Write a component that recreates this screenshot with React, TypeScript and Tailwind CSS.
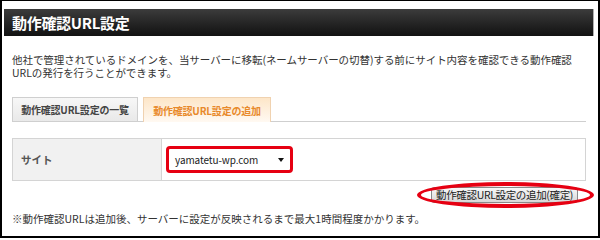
import React from "react";

const jp = "font-['Noto_Sans_CJK_JP','Liberation_Sans',sans-serif]";

export default function App() {
  return (
    <div className={`w-[600px] h-[238px] bg-white border-black border-t border-x-2 border-b-2 overflow-hidden ${jp}`}>
      <div className="mt-[8px] ml-[2px] mr-[4px] h-[27px] flex items-center pl-[8px] bg-gradient-to-b from-[#3c3c3c] to-[#121212] border-r border-[#b0b0b0]">
        <span className="text-white font-bold text-[15px] leading-none tracking-[-0.3px]">動作確認URL設定</span>
      </div>

      <div className="pl-[10px] pr-[12px]">
        <p className="mt-[17px] text-[10.5px] leading-[13px] text-[#333] tracking-[-0.05px]">
          他社で管理されているドメインを、当サーバーに移転(ネームサーバーの切替)する前にサイト内容を確認できる動作確認URLの発行を行うことができます。
        </p>

        <div className="mt-[18px] flex items-end gap-[5px] border-b border-[#cfcfcf] h-[25px]">
          <div className="w-[126px] h-[24px] flex items-center justify-center border border-b-0 border-[#cfcfcf] bg-gradient-to-b from-[#f7f7f7] to-[#e9e9e9]">
            <span className="text-[10px] font-bold text-[#444] tracking-[-0.2px]">動作確認URL設定の一覧</span>
          </div>
          <div className="w-[128px] h-[25px] -mb-px flex items-center justify-center border border-b-0 border-[#f0d2b0] bg-gradient-to-b from-[#fde6c8] to-[#fff9f2]">
            <span className="text-[10px] font-bold text-[#e8892a] tracking-[-0.2px]">動作確認URL設定の追加</span>
          </div>
        </div>

        <div className="mt-[16px] flex h-[43px] border border-[#d4d4d4]">
          <div className="w-[149px] bg-[#f1f1f1] border-r border-[#d4d4d4] flex items-center pl-[8px]">
            <span className="text-[10.5px] font-bold text-[#555]">サイト</span>
          </div>
          <div className="flex-1 flex items-center pl-[4px]">
            <div className="w-[127px] h-[27px] rounded-[4px] border-[3px] border-[#e60012] bg-white flex items-center justify-between pl-[6px] pr-[6px]">
              <span className="text-[10px] text-[#222] tracking-[-0.1px]">yamatetu-wp.com</span>
              <svg width="6" height="4" viewBox="0 0 6 4">
                <path d="M0 0h6L3 4z" fill="#111" />
              </svg>
            </div>
          </div>
        </div>

        <div className="mt-[6px] flex justify-end pr-[8px]">
          <div className="relative">
            <button className="h-[16px] px-[4px] rounded-[3px] border border-[#8a8a8a] bg-gradient-to-b from-[#f8f8f8] to-[#d8d8d8] flex items-center">
              <span className="text-[10.5px] leading-none text-[#222] tracking-[-0.35px]">動作確認URL設定の追加(確定)</span>
            </button>
            <div className="absolute left-[-14px] right-[-16px] top-[-5px] bottom-[-5px] rounded-[50%] border-[4px] border-[#e60012]" />
          </div>
        </div>

        <p className="mt-[9px] text-[10.5px] leading-[13px] text-[#333]">
          ※動作確認URLは追加後、サーバーに設定が反映されるまで最大1時間程度かかります。
        </p>
      </div>
    </div>
  );
}
